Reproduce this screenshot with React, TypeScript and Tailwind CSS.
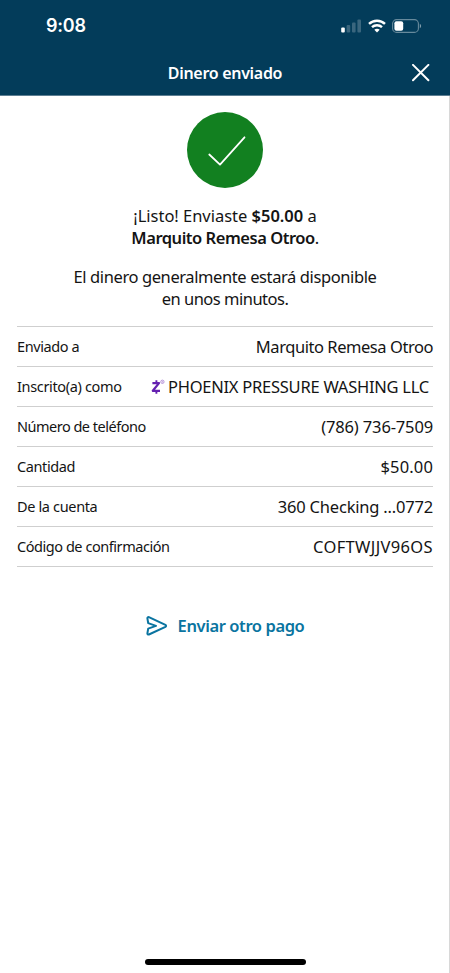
import React from 'react';

interface DetailRow {
  label: string;
  value: string;
  labelClass: string;
  valueClass: string;
  zelle?: boolean;
}

const ROWS: DetailRow[] = [
  { label: 'Enviado a', value: 'Marquito Remesa Otroo', labelClass: 'tracking-[-0.4px]', valueClass: 'tracking-[-0.45px]' },
  { label: 'Inscrito(a) como', value: 'PHOENIX PRESSURE WASHING LLC', labelClass: 'tracking-[-0.35px]', valueClass: 'tracking-[-0.25px] pr-1', zelle: true },
  { label: 'Número de teléfono', value: '(786) 736-7509', labelClass: 'tracking-[-0.5px]', valueClass: 'tracking-[-0.15px]' },
  { label: 'Cantidad', value: '$50.00', labelClass: 'tracking-[-0.4px]', valueClass: 'tracking-[0.15px]' },
  { label: 'De la cuenta', value: '360 Checking ...0772', labelClass: 'tracking-[-0.35px]', valueClass: 'tracking-[-0.2px]' },
  { label: 'Código de confirmación', value: 'COFTWJJV96OS', labelClass: 'tracking-[-0.45px]', valueClass: 'tracking-[0.35px]' }
];

const SignalIcon = () => (
  <svg width="21" height="14" viewBox="0 0 21 14" fill="#fff">
    <rect x="0.2" y="8.5" width="3.6" height="5" rx="1" />
    <rect x="5.6" y="6" width="3.6" height="7.5" rx="1" opacity="0.22" />
    <rect x="11" y="3.5" width="3.6" height="10" rx="1" opacity="0.22" />
    <rect x="16.4" y="0.5" width="3.6" height="13" rx="1" opacity="0.22" />
  </svg>
);

const WifiIcon = () => (
  <svg width="18" height="14" viewBox="0 0 18 14" fill="none" stroke="#fff" strokeWidth="2.4">
    <path d="M1 4.9C5.4 0.6 12.6 0.6 17 4.9" />
    <path d="M4 8.2C6.8 5.5 11.2 5.5 14 8.2" />
    <path d="M6.3 10.7C7.8 9.3 10.2 9.3 11.7 10.7L9 13.4Z" fill="#fff" stroke="none" />
  </svg>
);

const BatteryIcon = () => (
  <svg width="30" height="14" viewBox="0 0 30 14" fill="none">
    <rect x="0.6" y="0.6" width="25.8" height="12.8" rx="4" stroke="#fff" strokeOpacity="0.4" strokeWidth="1.1" />
    <rect x="2.4" y="2.2" width="8.8" height="9.6" rx="2" fill="#fff" />
    <path d="M27.8 4.8C29.6 5.6 29.6 8.4 27.8 9.2Z" fill="#fff" fillOpacity="0.5" />
  </svg>
);

const ZelleIcon = () => (
  <svg width="15" height="16" viewBox="0 0 15 16" fill="none" stroke="#6420b0">
    <path d="M1.4 4.1H8L1.8 11.8H9" strokeWidth="2.2" strokeLinejoin="round" />
    <path d="M5.4 1.3V4M5.4 12V14.7" strokeWidth="1.9" />
    <circle cx="11.4" cy="2.8" r="1.7" strokeWidth="0.7" opacity="0.6" />
    <circle cx="11.4" cy="2.8" r="0.5" strokeWidth="0.5" opacity="0.6" />
  </svg>
);

const SendIcon = () => (
  <svg width="22" height="20" viewBox="0 0 22 20" fill="none" stroke="#0a74a0" strokeWidth="2" strokeLinejoin="round" strokeLinecap="round">
    <path d="M1.4 2.3C1.3 1.3 2.1 0.9 2.9 1.2L19.4 8.9C20.3 9.4 20.3 10.4 19.4 10.9L2.9 18.5C2.1 18.8 1.3 18.4 1.4 17.4L2.2 12.6L10 9.9L2.2 7.1Z" />
  </svg>
);

const Header: React.FC = () => (
  <header className="flex h-24 flex-col border-b border-[#5c7e92] bg-[#033c5a] text-white">
    <div className="flex h-[51px] items-center justify-between pl-[46px] pr-[28px]">
      <span className="font-[Inter,sans-serif] text-[18px] font-semibold leading-none tracking-[-0.2px]">9:08</span>
      <div className="flex items-center gap-[6px]">
        <SignalIcon />
        <WifiIcon />
        <BatteryIcon />
      </div>
    </div>
    <div className="grid h-11 grid-cols-[1fr_auto_1fr] items-center px-5">
      <h1 className="col-start-2 text-base font-semibold tracking-[-0.3px]">Dinero enviado</h1>
      <button className="justify-self-end" aria-label="Cerrar">
        <svg width="18" height="18" viewBox="0 0 18 18" stroke="#fff" strokeWidth="2" strokeLinecap="round">
          <path d="M1 0.9L16.4 16.3M16.4 0.9L1 16.3" />
        </svg>
      </button>
    </div>
  </header>
);

export default function App() {
  return (
    <div className="flex h-[973px] w-[450px] flex-col overflow-hidden bg-white font-['Noto_Sans',sans-serif] text-[#141414]">
      <Header />
      <main className="flex flex-1 flex-col border-r border-[#d8d8d8] pl-[17px] pr-4">
        <div className="mt-4 flex size-[76px] items-center justify-center self-center rounded-full bg-[#128020]">
          <svg width="38" height="30" viewBox="0 0 38 30" fill="none" stroke="#fff" strokeWidth="1.8" strokeLinecap="round" strokeLinejoin="round" className="ml-[3px] mt-px">
            <path d="M1.3 18.5L12 28.6L36.5 1.3" />
          </svg>
        </div>

        <p className="mt-[17px] text-center text-[16.5px] leading-[22px]">
          <span className="tracking-[-0.02px]">¡Listo! Enviaste <b className="font-semibold">$50.00</b> a</span>
          <br />
          <span className="tracking-[-0.47px]"><b className="font-semibold">Marquito Remesa Otroo</b>.</span>
        </p>
        <p className="mt-[17px] text-center text-[16.5px] leading-[22px]">
          <span className="tracking-[-0.4px]">El dinero generalmente estará disponible</span>
          <br />
          <span className="tracking-[-0.5px]">en unos minutos.</span>
        </p>

        <dl className="mt-4 border-t border-[#cfcfcf]">
          {ROWS.map(row => (
            <div key={row.label} className="flex h-10 items-center justify-between whitespace-nowrap border-b border-[#cfcfcf]">
              <dt className={`text-[14.5px] ${row.labelClass}`}>{row.label}</dt>
              <dd className={`flex items-center gap-[2px] pt-px text-[16.5px] ${row.valueClass}`}>
                {row.zelle && <ZelleIcon />}
                {row.value}
              </dd>
            </div>
          ))}
        </dl>

        <button className="mt-[47px] flex items-center gap-[10px] self-center text-[#0a74a0]">
          <SendIcon />
          <span className="text-[16.5px] font-semibold tracking-[-0.4px]">Enviar otro pago</span>
        </button>

        <div className="mb-2 mt-auto h-[6px] w-[161px] self-center rounded-full bg-black" />
      </main>
    </div>
  );
}
